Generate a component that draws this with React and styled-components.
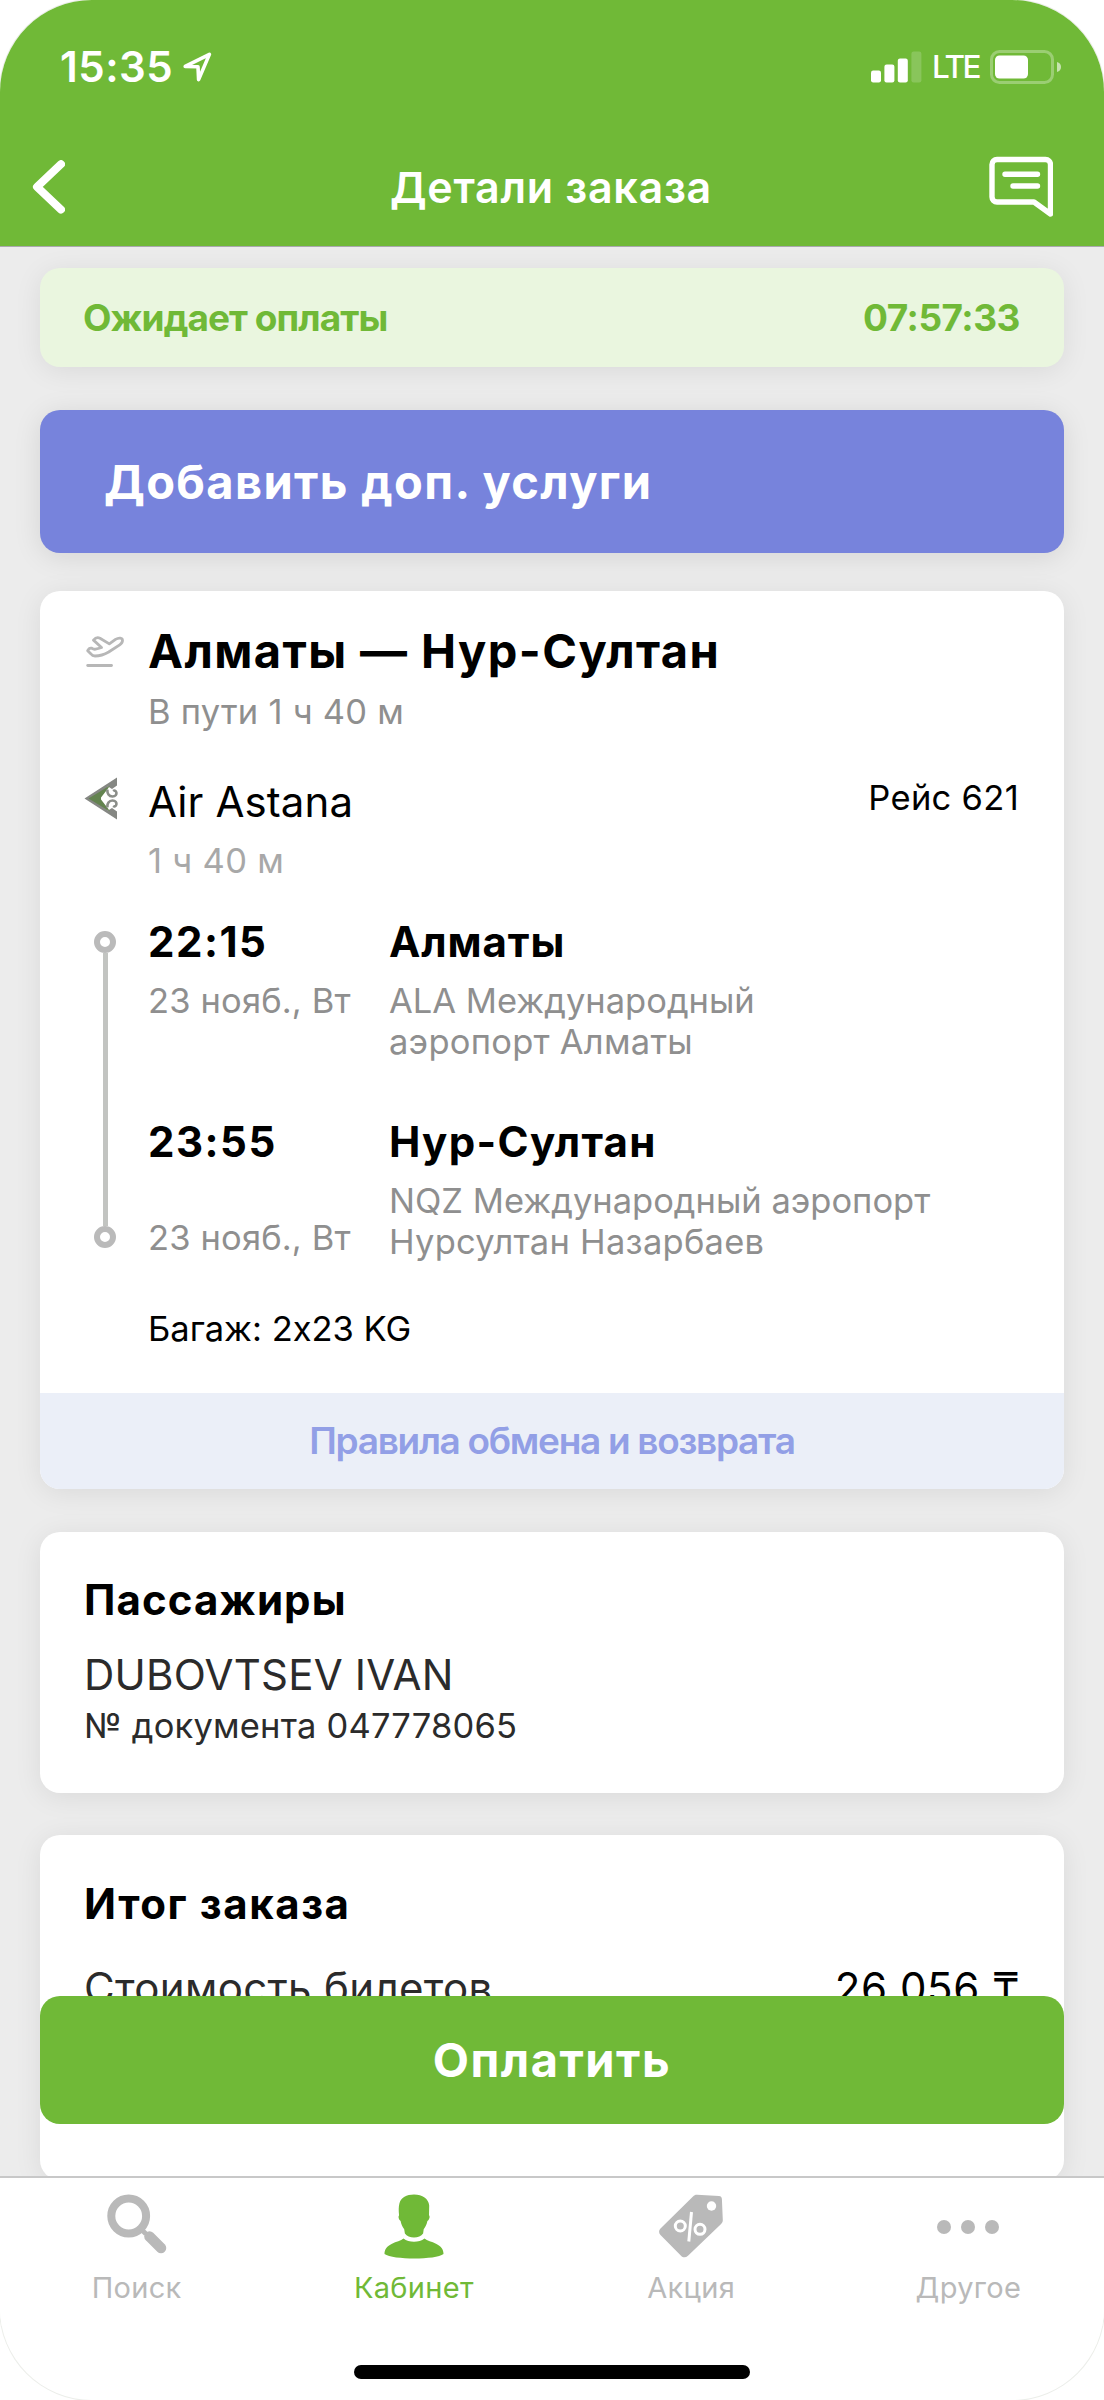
import React from 'react';
import styled, { createGlobalStyle } from 'styled-components';

const GREEN = '#70b937';

const App = () => {
  return (
    <>
      <GlobalStyle />
      <Screen>
        <StatusBar>
          <Clock>
            <span>15:35</span>
            <LocationIcon />
          </Clock>
          <StatusIcons>
            <SignalIcon />
            <Network>LTE</Network>
            <BatteryIcon />
          </StatusIcons>
        </StatusBar>
        <Header>
          <BackIcon />
          <HeaderTitle>Детали заказа</HeaderTitle>
          <ChatIcon />
        </Header>

        <Content>
          <PaymentStatus>
            <span>Ожидает оплаты</span>
            <Timer>07:57:33</Timer>
          </PaymentStatus>
          <ServicesButton>Добавить доп. услуги</ServicesButton>
          <FlightCard />
          <PassengersCard>
            <CardTitle $spacing="1.1px">Пассажиры</CardTitle>
            {passengers.map(passenger => <div key={passenger.document}>
              <PassengerName>{passenger.name}</PassengerName>
              <PassengerDocument>№ документа {passenger.document}</PassengerDocument>
            </div>)}
          </PassengersCard>
          <TotalCard>
            <CardTitle $spacing="1.6px">Итог заказа</CardTitle>
            <PriceRow>
              <PriceLabel>Стоимость билетов</PriceLabel>
              <Price>26 056 ₸</Price>
            </PriceRow>
          </TotalCard>
          <PayButton>Оплатить</PayButton>
        </Content>

        <TabBar>
          {tabs.map(tab => <Tab key={tab.label} $active={tab.active}>
            <TabIconBox>{tab.icon}</TabIconBox>
            <TabLabel>{tab.label}</TabLabel>
          </Tab>)}
        </TabBar>
        <HomeArea>
          <HomeIndicator />
        </HomeArea>
      </Screen>
    </>
  );
};

export default App;

const FlightCard = () => {
  return (
    <Card>
      <FlightBody>
        <IconRow>
          <TakeoffIcon />
          <Route>Алматы — Нур-Султан</Route>
        </IconRow>
        <Duration>В пути 1 ч 40 м</Duration>
        <AirlineRow>
          <AirlineLogo><AirlineIcon /></AirlineLogo>
          <AirlineName>Air Astana</AirlineName>
          <FlightNumber>Рейс 621</FlightNumber>
        </AirlineRow>
        <SegmentDuration>1 ч 40 м</SegmentDuration>
        <Segment>
          <Rail>
            <Dot />
            <RailLine />
            <Dot />
          </Rail>
          <Stops>
            {stops.map(stop => <Stop key={stop.time}>
              <StopTime>
                <Strong $spacing="1.5px">{stop.time}</Strong>
                <Small>{stop.date}</Small>
              </StopTime>
              <StopPlace>
                <Strong $spacing={stop.spacing}>{stop.city}</Strong>
                {stop.airport.map(line => <AirportLine key={line}>{line}</AirportLine>)}
              </StopPlace>
            </Stop>)}
          </Stops>
        </Segment>
        <Baggage>Багаж: 2x23 KG</Baggage>
      </FlightBody>
      <RulesButton>Правила обмена и возврата</RulesButton>
    </Card>
  );
};

const LocationIcon = () => (
  <svg width="29" height="30" viewBox="0 0 29 30" fill="none" stroke="#fff" strokeWidth="3.6" strokeLinejoin="round">
    <path d="M2.2 14.4 26.4 2.4 15.6 27.6 15 14.8Z" />
  </svg>
);

const SignalIcon = () => (
  <svg width="51" height="32" viewBox="0 0 51 32" fill="#fff">
    <rect x="0" y="19.5" width="10" height="12" rx="2.2" />
    <rect x="13.4" y="13.5" width="10" height="18" rx="2.2" />
    <rect x="26.8" y="7.5" width="10" height="24" rx="2.2" />
    <rect x="40.4" y="0.5" width="10" height="31" rx="2.2" opacity="0.18" />
  </svg>
);

const BatteryIcon = () => (
  <svg width="72" height="34" viewBox="0 0 72 34" fill="none">
    <rect x="1.5" y="1.5" width="61" height="31" rx="8" stroke="#fff" strokeOpacity="0.3" strokeWidth="3" />
    <rect x="5" y="5.5" width="33" height="23" rx="4.5" fill="#fff" />
    <path d="M67 12c2.6.8 4 2.5 4 5s-1.4 4.2-4 5Z" fill="#fff" fillOpacity="0.6" />
  </svg>
);

const BackIcon = () => (
  <svg width="33" height="54" viewBox="0 0 33 54" fill="none" stroke="#fff" strokeWidth="8" strokeLinecap="round" strokeLinejoin="round">
    <path d="M29 4.2 5 26.8 29 49.6" />
  </svg>
);

const ChatIcon = () => (
  <svg width="64" height="62" viewBox="0 0 64 62" fill="none" stroke="#fff" strokeWidth="5.4" strokeLinecap="round" strokeLinejoin="round">
    <path d="M8 3.5h48.5a5 5 0 0 1 5 5V58L45 46H8a5 5 0 0 1-5-5V8.500a5 5 0 0 1 5-5Z" />
    <path d="M16 18.3h32.5M24 30h24.5" />
  </svg>
);

const TakeoffIcon = () => (
  <svg width="38" height="33" viewBox="10.5 11.5 38 33" fill="none" stroke="#b7b7b7" strokeWidth="2.8" strokeLinecap="round" strokeLinejoin="round">
    <path d="M12.2 27.2c.8-1.7 2.2-2.8 3.8-2.5 1.5.5 2.4 1.3 4 1 2-.3 4.2-1 6-1.7L18 16.6c1.7-2.1 4.1-3 6.500-1.9l9.300 5.700 6.200-4.500c3.600-2.200 6.800-1.500 7 .9.100 2-1 3.300-2.800 4.500l-11 7.200c-4.600 2.700-9.600 4-13.700 4-2.200 0-3-.6-4-2Z" />
    <path d="M12.2 42H36" />
  </svg>
);

const AirlineIcon = () => (
  <svg width="34" height="43" viewBox="0 0 34 43">
    <path d="M0.5 21.5 33 0.5V8.5L28 12 24 9.5 15.5 21.5 24 33.5 28 31 33 34.5V42.5Z" fill="#858783" />
    <path d="M4.5 21.5 26 8.5 24 11.5 17 20.5V22.5L24 31.5 26 34.5Z" fill="#63834f" />
    <path d="M23.5 12.5c-.6 4 1.5 7 5 7 3 0 4.300-2 3.800-4.200-.4-1.600-2-2.200-3.200-1.300M23.5 30.5c-.6-4 1.500-7 5-7 3 0 4.300 2 3.800 4.200-.4 1.600-2 2.200-3.200 1.300" fill="none" stroke="#8b8e89" strokeWidth="2.6" />
  </svg>
);

const SearchIcon = () => (
  <svg width="60" height="62" viewBox="0 0 60 62" fill="none" stroke="currentColor">
    <circle cx="21.7" cy="22" r="17.4" strokeWidth="8" />
    <path d="M34 35 39 40" strokeWidth="5" />
    <path d="M42.5 42.5 54 54" strokeWidth="10.5" strokeLinecap="round" />
  </svg>
);

const PersonIcon = () => (
  <svg width="60" height="66" viewBox="0 0 60 66" fill="currentColor">
    <path d="M30 0.500c8.500 0 14.600 4.200 15.200 11l-.2 9.800c1.200 1 .5 4.400-1.600 5.700-.6 3.300-1.700 5.600-3.700 8.200l-.6 4.300c-1.800 2.800-5.300 4-9.100 4s-7.300-1.200-9.100-4l-.7-4.300c-2-2.600-3-5-3.600-8.200-2-1.200-2.700-4.500-1.500-5.700C14.600 17 14.500 13 15.400 9.500 17 3.200 22.500.5 30 .5Z" />
    <path d="M19.500 44.500c5.400 4.300 15.600 4.300 21 0 2.500 2.200 7.500 3.200 11.500 5.200 5 2.400 7.500 5.300 7.500 10.300C52 66 9 66 .5 60c0-5 2.500-7.900 7.500-10.300 4-2 9-3 11.500-5.200Z" />
  </svg>
);

const TagIcon = () => (
  <svg width="64" height="64" viewBox="0 0 64 64">
    <path d="M38 0.800 60 2c1.700.1 2.800 1.200 2.900 2.900L63.800 26c.1 1.500-.5 2.800-1.700 3.900L29 61.800c-2.300 2-5 2-7 0L1.500 41c-1.900-2-1.900-4.600 0-6.600L34 2.500C35.200 1.300 36.500.7 38 .8Z" fill="currentColor" />
    <circle cx="52.5" cy="12" r="4.7" fill="#fff" />
    <g fill="none" stroke="#fff" strokeWidth="3">
      <circle cx="21.3" cy="32" r="5" />
      <circle cx="41" cy="35.3" r="5" />
      <path d="M32.5 18 29.8 47.5" />
    </g>
  </svg>
);

const MoreIcon = () => (
  <svg width="62" height="64" viewBox="0 0 62 64" fill="currentColor">
    <circle cx="7" cy="33" r="7" />
    <circle cx="31" cy="33" r="7" />
    <circle cx="55" cy="33" r="7" />
  </svg>
);

const passengers = [
  { name: 'DUBOVTSEV IVAN', document: '047778065' },
];

const stops = [
  { time: '22:15', date: '23 нояб., Вт', city: 'Алматы', spacing: '0.9px', airport: ['ALA Международный', 'аэропорт Алматы'] },
  { time: '23:55', date: '23 нояб., Вт', city: 'Нур-Султан', spacing: '1.3px', airport: ['NQZ Международный аэропорт', 'Нурсултан Назарбаев'] },
];

const tabs = [
  { label: 'Поиск', icon: <SearchIcon /> },
  { label: 'Кабинет', icon: <PersonIcon />, active: true },
  { label: 'Акция', icon: <TagIcon /> },
  { label: 'Другое', icon: <MoreIcon /> },
];

const GlobalStyle = createGlobalStyle`
  * {
    box-sizing: border-box;
  }
  body {
    margin: 0;
    background: #fff;
    font-family: Inter, 'Liberation Sans', sans-serif;
  }
  svg {
    display: block;
    flex-shrink: 0;
  }
`

const Screen = styled.div`
  display: flex;
  flex-direction: column;
  width: 1104px;
  height: 2400px;
  border-radius: 92px;
  overflow: hidden;
  background: #fff;
  box-shadow: 0 0 0 1px #eceeea;
`

const StatusBar = styled.div`
  display: flex;
  justify-content: space-between;
  height: 134px;
  padding: 42px 42px 0 60px;
  background: ${GREEN};
  color: #fff;
`

const Clock = styled.div`
  display: flex;
  align-items: center;
  gap: 10px;
  height: 50px;
  font-size: 42px;
  font-weight: 600;
  line-height: 50px;
  letter-spacing: 0.5px;
`

const StatusIcons = styled.div`
  display: flex;
  align-items: center;
  gap: 10px;
  height: 50px;
`

const Network = styled.span`
  width: 48px;
  font-size: 31.5px;
  font-weight: 500;
  line-height: 52px;
  letter-spacing: -2.4px;
`

const Header = styled.div`
  display: flex;
  align-items: center;
  height: 113px;
  padding: 0 51px 6px 32px;
  background: ${GREEN};
  border-bottom: 1px solid #a9a9ae;
  color: #fff;
`

const HeaderTitle = styled.h1`
  flex: 1;
  margin: 0;
  padding-left: 48px;
  font-size: 43px;
  font-weight: 600;
  line-height: 60px;
  text-align: center;
  letter-spacing: 0.7px;
`

const Content = styled.main`
  height: 1929px;
  padding: 21px 40px 0;
  overflow: hidden;
  background: #ececec;
`

const Card = styled.section`
  overflow: hidden;
  border-radius: 20px;
  background: #fff;
  box-shadow: 0 4px 28px rgba(0, 0, 0, 0.08);
`

const PaymentStatus = styled(Card)`
  display: flex;
  align-items: center;
  justify-content: space-between;
  height: 99px;
  padding: 0 44px 0 43px;
  background: #eaf6df;
  color: ${GREEN};
  font-size: 37px;
  font-weight: 700;
  letter-spacing: -0.95px;
`

const Timer = styled.span`
  letter-spacing: -0.5px;
`

const ServicesButton = styled.button`
  display: block;
  width: 100%;
  height: 143px;
  margin: 43px 0 38px;
  padding: 0 64px;
  border: none;
  border-radius: 20px;
  background: #7783dc;
  box-shadow: 0 4px 28px rgba(0, 0, 0, 0.1);
  color: #fff;
  font-family: inherit;
  font-size: 47px;
  font-weight: 700;
  line-height: 143px;
  text-align: left;
  letter-spacing: 1.35px;
`

const FlightBody = styled.div`
  padding: 30px 45px 43px 44px;
`

const IconRow = styled.div`
  display: flex;
  align-items: center;
  gap: 24px;
  height: 60px;
  padding-left: 2px;
`

const Route = styled.h2`
  margin: 0;
  font-size: 47px;
  font-weight: 700;
  line-height: 60px;
  letter-spacing: 1.4px;
`

const Small = styled.div`
  color: #8f8f8f;
  font-size: 34.5px;
  line-height: 41px;
  letter-spacing: 0.15px;
`

const Duration = styled(Small)`
  margin: 10px 0 44px 64px;
  line-height: 42px;
  letter-spacing: 0.25px;
`

const AirlineRow = styled.div`
  display: flex;
  align-items: center;
  gap: 30px;
  height: 50px;
`

const AirlineLogo = styled.div`
  padding-bottom: 7px;
`

const AirlineName = styled.div`
  flex: 1;
  font-size: 42px;
  line-height: 50px;
  letter-spacing: 0.1px;
`

const FlightNumber = styled.div`
  padding-bottom: 8px;
  font-size: 34.5px;
  line-height: 42px;
  letter-spacing: 0.3px;
`

const SegmentDuration = styled(Small)`
  margin: 13px 0 35px 64px;
  color: #a8a8a8;
  line-height: 42px;
  letter-spacing: 0.3px;
`

const Segment = styled.div`
  display: flex;
`

const Rail = styled.div`
  display: flex;
  flex-direction: column;
  align-items: center;
  width: 22px;
  margin: 14px 32px 14px 10px;
`

const Dot = styled.div`
  width: 22px;
  height: 22px;
  border: 6px solid #bababa;
  border-radius: 50%;
`

const RailLine = styled.div`
  flex: 1;
  width: 5px;
  background: #c2c4c1;
`

const Stops = styled.div`
  display: flex;
  flex: 1;
  flex-direction: column;
  gap: 55px;
`

const Stop = styled.div`
  display: flex;
`

const StopTime = styled.div`
  display: flex;
  flex-direction: column;
  width: 241px;

  ${Stop}:last-child & {
    justify-content: space-between;
    padding-bottom: 4px;
  }
`

const StopPlace = styled.div`
  flex: 1;
`

const Strong = styled.div`
  margin-bottom: 13px;
  font-size: 42px;
  font-weight: 700;
  line-height: 50px;
  letter-spacing: ${props => props.$spacing};
`

const AirportLine = styled(Small)`
  letter-spacing: 0;

  &:last-child {
    letter-spacing: 0.25px;
  }
`

const Baggage = styled.div`
  margin: 46px 0 0 64px;
  font-size: 34.5px;
  line-height: 42px;
`

const RulesButton = styled.button`
  display: block;
  width: 100%;
  height: 96px;
  padding: 0;
  border: none;
  background: #ebeff8;
  color: #929fe6;
  font-family: inherit;
  font-size: 37px;
  font-weight: 600;
  line-height: 96px;
  letter-spacing: -1.3px;
`

const PassengersCard = styled(Card)`
  height: 261px;
  margin-top: 43px;
  padding: 43px 44px 0;
`

const CardTitle = styled.h2`
  margin: 0;
  font-size: 42px;
  font-weight: 700;
  line-height: 50px;
  letter-spacing: ${props => props.$spacing};
`

const PassengerName = styled.div`
  margin-top: 25px;
  color: #2b2b2b;
  font-size: 42px;
  line-height: 50px;
  letter-spacing: 0.2px;
`

const PassengerDocument = styled.div`
  margin-top: 5px;
  color: #2b2b2b;
  font-size: 34.5px;
  line-height: 42px;
  letter-spacing: 0.2px;
`

const TotalCard = styled(Card)`
  height: 345px;
  margin-top: 42px;
  padding: 44px 44px 0;
`

const PriceRow = styled.div`
  display: flex;
  justify-content: space-between;
  margin-top: 34px;
  font-size: 42px;
  line-height: 50px;
`

const PriceLabel = styled.span`
  color: #2b2b2b;
  letter-spacing: 0.35px;
`

const Price = styled.span`
  color: #000;
  letter-spacing: 0.6px;
`

/* floats over the last card */
const PayButton = styled.button`
  position: relative;
  display: block;
  width: 100%;
  height: 128px;
  margin-top: -184px;
  padding: 0;
  border: none;
  border-radius: 20px;
  background: ${GREEN};
  color: #fff;
  font-family: inherit;
  font-size: 47px;
  font-weight: 700;
  line-height: 128px;
  letter-spacing: 1.5px;
`

const TabBar = styled.nav`
  display: flex;
  height: 150px;
  margin: 0 -3px 0 -2px;
  border-top: 2px solid #c8c8c8;
  background: #fff;
`

const Tab = styled.div`
  display: flex;
  flex: 1;
  flex-direction: column;
  align-items: center;
  padding-top: 16px;
  color: ${props => props.$active ? GREEN : '#b9b9b9'};
`

const TabIconBox = styled.div`
  height: 76px;
`

const TabLabel = styled.div`
  font-size: 29px;
  line-height: 36px;
  letter-spacing: 0.3px;
`

const HomeArea = styled.div`
  display: flex;
  flex: 1;
  justify-content: center;
  align-items: flex-end;
  padding-bottom: 21px;
`

const HomeIndicator = styled.div`
  width: 396px;
  height: 14px;
  border-radius: 7px;
  background: #000;
`
